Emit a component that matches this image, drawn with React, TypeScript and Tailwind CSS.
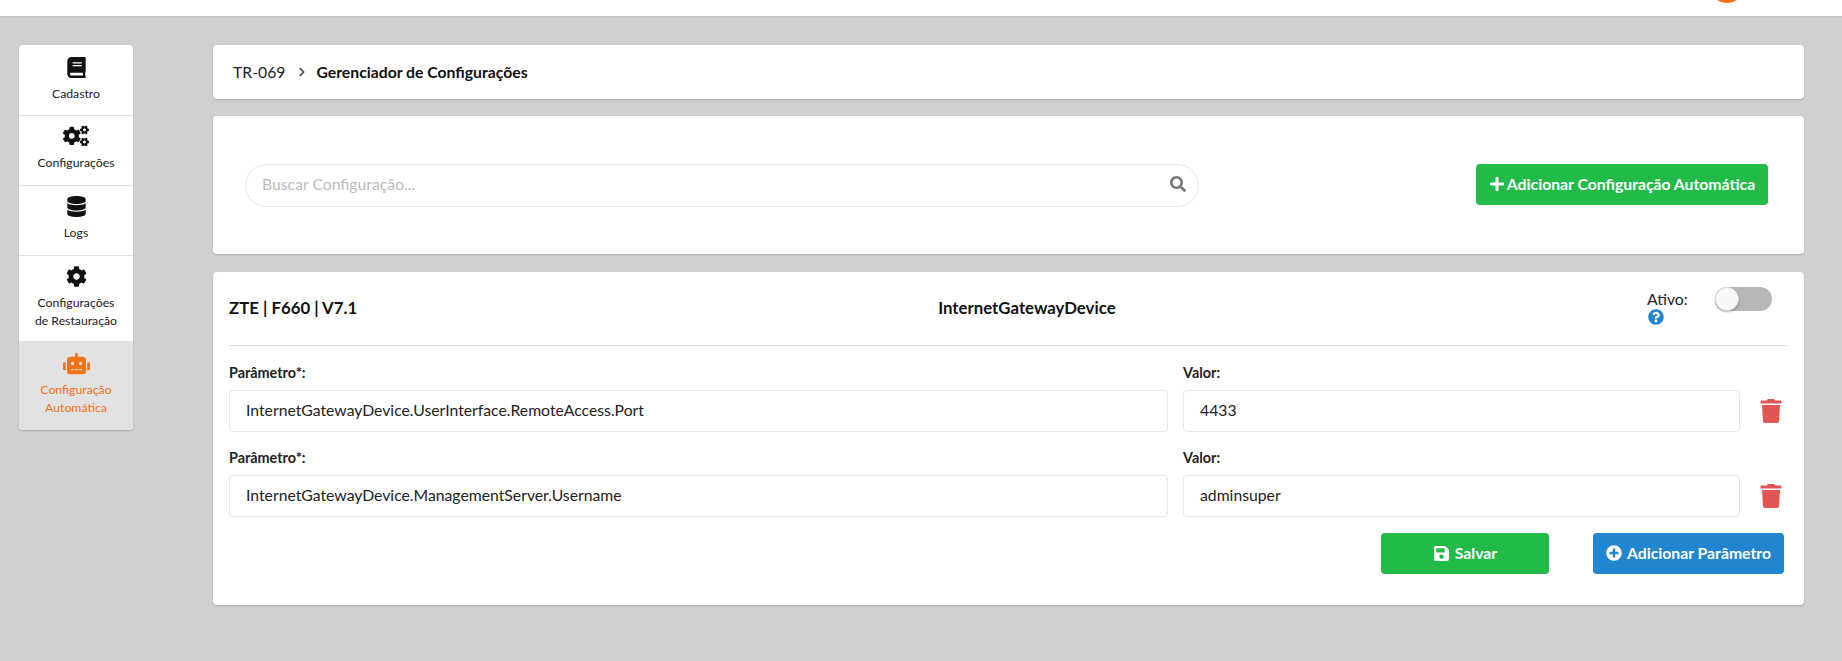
import React from 'react';
import {
  FaBook,
  FaCogs,
  FaDatabase,
  FaCog,
  FaRobot,
  FaSearch,
  FaPlus,
  FaQuestionCircle,
  FaTrash,
  FaSave,
  FaPlusCircle,
  FaChevronRight,
} from 'react-icons/fa';

const sideItems = [
  { icon: <FaBook size={21} />, label: ['Cadastro'], box: 'h-[71px] pt-[11px]' },
  { icon: <FaCogs size={26} />, label: ['Configurações'], box: 'h-[70px] pt-[9px]' },
  { icon: <FaDatabase size={21} />, label: ['Logs'], box: 'h-[70px] pt-[9px]' },
  { icon: <FaCog size={21} />, label: ['Configurações', 'de Restauração'], box: 'h-[86px] pt-[9px]' },
];

const Sidebar = () => (
  <aside className="mt-[27px] h-[385px] w-[114px] shrink-0 rounded-[4px] bg-white shadow-[0_1px_2px_rgba(0,0,0,0.2)]">
    {sideItems.map((item) => (
      <div
        key={item.label.join() + item.box}
        className={`${item.box} flex flex-col items-center border-b border-[#e3e3e3] text-[#222]`}
      >
        <div className="flex h-[22px] items-center text-[#111]">{item.icon}</div>
        <div className="mt-[7px] text-center text-[12.25px] leading-[18px]">
          {item.label.map((l) => (
            <div key={l}>{l}</div>
          ))}
        </div>
      </div>
    ))}
    <div className="flex h-[88px] flex-col items-center rounded-b-[4px] bg-[#e1e2e4] pt-[10px] text-[#f97316]">
      <div className="flex h-[22px] items-center">
        <FaRobot size={27} />
      </div>
      <div className="mt-[7px] text-center text-[12.25px] leading-[18px]">
        <div>Configuração</div>
        <div>Automática</div>
      </div>
    </div>
  </aside>
);

const Card = ({ className, children }: { className: string; children: React.ReactNode }) => (
  <section className={`rounded-[4px] bg-white shadow-[0_1px_2px_rgba(0,0,0,0.2)] ${className}`}>{children}</section>
);

const ParamRow = ({ param, value }: { param: string; value: string }) => (
  <div className="flex">
    <div className="w-[939px]">
      <div className="pt-[1px] text-[14.4px] leading-[18px] font-bold text-[#222]">Parâmetro*:</div>
      <div className="mt-[8px] flex h-[42px] items-center rounded-[4px] border border-[#e6e6e6] pb-[2px] pl-[16px] text-[15.75px] text-[#222]">
        {param}
      </div>
    </div>
    <div className="ml-[15px] w-[557px]">
      <div className="pt-[1px] text-[14.4px] leading-[18px] font-bold text-[#222]">Valor:</div>
      <div className="mt-[8px] flex h-[42px] items-center rounded-[4px] border border-[#e6e6e6] pb-[2px] pl-[16px] text-[15.75px] text-[#222]">
        {value}
      </div>
    </div>
    <div className="ml-[19px] flex w-[24px] items-end pb-[9px] text-[#e35555]">
      <FaTrash size={24} />
    </div>
  </div>
);

export default function App() {
  return (
    <div className="h-[661px] w-[1842px] overflow-hidden bg-[#d0d0d0] font-['Lato',sans-serif]">
      <header className="flex h-[18px] justify-end overflow-hidden border-b-2 border-[#c6c6c6] bg-white pr-[98px]">
        <div className="mt-[-31px] h-[34px] w-[34px] rounded-full bg-[#f97316]" />
      </header>
      <div className="flex pl-[19px]">
        <Sidebar />
        <main className="mt-[27px] ml-[80px] w-[1591px]">
          <Card className="flex h-[54px] items-center pb-[1px] pl-[20px] text-[15.75px] text-[#222]">
            <span>TR-069</span>
            <FaChevronRight size={10} className="mr-[9px] ml-[12px] text-[#444]" />
            <span className="font-bold text-[#111]">Gerenciador de Configurações</span>
          </Card>
          <Card className="mt-[17px] flex h-[138px] items-center justify-between pr-[36px] pl-[32px]">
            <div className="flex h-[43px] w-[954px] items-center justify-between rounded-full border border-[#e6e6e6] pr-[12px] pb-[2px] pl-[16px]">
              <span className="text-[15.75px] text-[#bbb]">Buscar Configuração...</span>
              <FaSearch size={16} className="text-[#777]" />
            </div>
            <button className="mb-[2px] flex h-[41px] w-[292px] items-center justify-center gap-[2px] rounded-[4px] bg-[#22bb47] pb-[1px] text-[15.75px] font-bold text-white">
              <FaPlus size={16} />
              Adicionar Configuração Automática
            </button>
          </Card>
          <Card className="mt-[18px] h-[333px] pr-[16px] pl-[16px]">
            <div className="flex h-[74px] items-start border-b border-[#e0e0e0] pt-[26px]">
              <span className="text-[16.8px] leading-[20px] font-bold text-[#111]">ZTE | F660 | V7.1</span>
              <span className="ml-[581px] text-[16.8px] leading-[20px] font-bold text-[#111]">InternetGatewayDevice</span>
              <div className="ml-auto flex pr-[16px]">
                <div className="mt-[-8px] w-[68px] text-[15.75px] leading-[18px] text-[#222]">
                  <div>Ativo:</div>
                  <FaQuestionCircle size={16} className="mt-[1px] ml-[1px] text-[#2185d0]" />
                </div>
                <div className="mt-[-11px] flex h-[24px] w-[57px] rounded-full bg-[#b7b7b7]">
                  <div className="h-[24px] w-[24px] rounded-full border border-[#ddd] bg-[#f8f8f8] shadow-[0_1px_2px_rgba(0,0,0,0.3)]" />
                </div>
              </div>
            </div>
            <div className="mt-[17px] flex flex-col gap-[16px]">
              <ParamRow param="InternetGatewayDevice.UserInterface.RemoteAccess.Port" value="4433" />
              <ParamRow param="InternetGatewayDevice.ManagementServer.Username" value="adminsuper" />
            </div>
            <div className="mt-[16px] flex justify-end gap-[44px] pr-[4px]">
              <button className="flex h-[41px] w-[168px] items-center justify-center gap-[5px] rounded-[4px] bg-[#22bb47] pb-[1px] text-[15.75px] font-bold text-white">
                <FaSave size={17} />
                Salvar
              </button>
              <button className="flex h-[41px] w-[191px] items-center justify-center gap-[5px] rounded-[4px] bg-[#2185d0] pb-[1px] text-[15.75px] font-bold text-white">
                <FaPlusCircle size={16} />
                Adicionar Parâmetro
              </button>
            </div>
          </Card>
        </main>
      </div>
    </div>
  );
}
